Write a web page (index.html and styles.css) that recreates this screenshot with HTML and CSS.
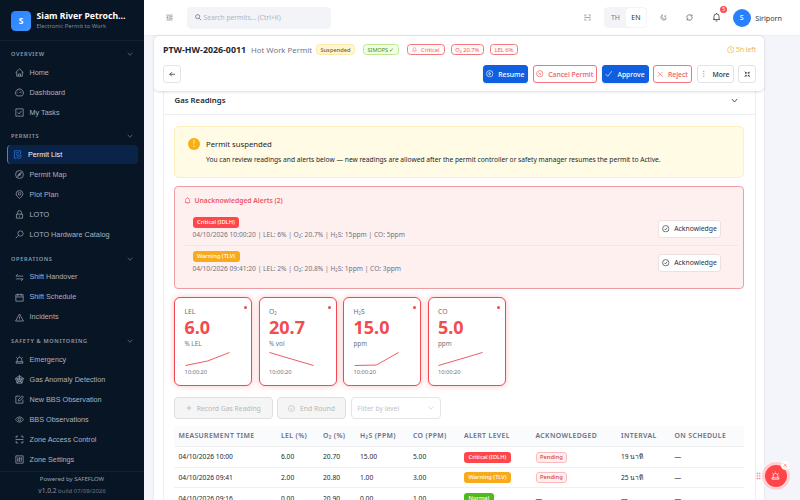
FILE: index.html
```html
<!DOCTYPE html>
<html lang="en">
  <head>
    <meta charset="UTF-8" />
    <title>PTW-HW-2026-0011</title>
    <meta name="viewport" content="width=device-width, initial-scale=1.0" />
    <link rel="stylesheet" href="styles.css">
  </head>
  <body>
    <!-- icon sprite -->
    <svg class="sprite">
      <symbol id="home" viewBox="0 0 16 16"><path d="M1 8.2 8 1.5l7 6.7M3 7v7.5h10V7M6.3 14.5v-4h3.4v4" /></symbol>
      <symbol id="dashboard" viewBox="0 0 16 16"><path d="M3.5 14a7 7 0 1 1 9 0zM8 9l3-3.2M8 3.2v1.2M3.2 8.5h1.2M11.6 8.5h1.2M4.7 5l.8.8" /></symbol>
      <symbol id="tasks" viewBox="0 0 16 16"><path d="M1.5 1.5h13v13h-13zM4.8 7.8l2.5 2.8 4-5.3" /></symbol>
      <symbol id="permit" viewBox="0 0 16 16"><path d="M6.5 14.5h-4v-13h11v6M5 5h6M5 8h2.5M11 8.5l3.3 1.2v2.5c0 1.6-1.5 2.5-3.3 3.3-1.8-.8-3.3-1.7-3.3-3.3V9.7zM9.7 11.8l1 1 1.6-1.8" /></symbol>
      <symbol id="compass" viewBox="0 0 16 16"><circle cx="8" cy="8" r="7" /><path d="m11.3 4.7-2 4.6-4.6 2 2-4.6zM7 7l2 2" /></symbol>
      <symbol id="pin" viewBox="0 0 16 16"><path d="M8 15c3.5-3 6-5.3 6-8.5A5.8 5.8 0 0 0 8 1a5.8 5.8 0 0 0-6 5.5C2 9.7 4.5 12 8 15z" /><circle cx="8" cy="6.7" r="2.3" /></symbol>
      <symbol id="lock" viewBox="0 0 16 16"><path d="M2.5 7.5h11v7h-11zM4.700 7.500V4.300a3.300 3.300 0 0 1 6.600 0v3.200M8 10v2" /></symbol>
      <symbol id="search" viewBox="0 0 16 16"><circle cx="6.5" cy="6.5" r="5" /><path d="m10.3 10.3 4.7 4.7" /></symbol>
      <symbol id="tool" viewBox="0 0 16 16"><circle cx="9.8" cy="6.2" r="4.7" /><path d="m6.3 9.7-5 5" /></symbol>
      <symbol id="swap" viewBox="0 0 16 16"><path d="M14.5 5.5h-13L5 2M1.5 10.5h13L11 14" /></symbol>
      <symbol id="calendar" viewBox="0 0 16 16"><path d="M1.5 3h13v11.5h-13zM1.5 7h13M5 1v4M11 1v4" /></symbol>
      <symbol id="warning" viewBox="0 0 16 16"><path d="m8 1.8 7 12.5H1zM8 6.3v4M8 11.5v1.2" /></symbol>
      <symbol id="alert" viewBox="0 0 16 16"><path d="M3.8 12V8.500a4.200 4.200 0 0 1 8.400 0V12M2 12h12v2.500H2zM8 1v1.500M2 3.500l1.200 1M14 3.500l-1.200 1" /></symbol>
      <symbol id="radar" viewBox="0 0 16 16"><path d="m8 1 7 5.200-2.700 8.300H3.700L1 6.200zM8 4.200l4 3-1.500 4.600h-5L4 7.200zM8 1v7l7-1.800M8 8l4.300 6.500M8 8l-4.300 6.500M8 8 1 6.200" /></symbol>
      <symbol id="form" viewBox="0 0 16 16"><path d="M14 8v6.500H1.500V2H9M6 10.500V8l7-6.500L15 3.500 8.500 10.500z" /></symbol>
      <symbol id="eye" viewBox="0 0 16 16"><path d="M1 8c3.500-6 10.500-6 14 0-3.500 6-10.500 6-14 0z" /><circle cx="8" cy="8" r="2.4" /></symbol>
      <symbol id="scan" viewBox="0 0 16 16"><path d="M2 5.500V2h3.500M10.500 2H14v3.500M14 10.500V14h-3.500M5.500 14H2v-3.500M1 8h14" /></symbol>
      <symbol id="control" viewBox="0 0 16 16"><path d="M1.500 1.500h13v13h-13zM5 4v8M8 4v8M11 4v8M4 9h2M10 6.500h2" /></symbol>
      <symbol id="down" viewBox="0 0 16 16"><path d="m2 4.500 6 7 6-7" /></symbol>
      <symbol id="fold" viewBox="0 0 16 16"><path d="M1 2.500h14M7 6.200h8M7 9.800h8M1 13.500h14M4.500 5.800 1.500 8l3 2.200z" /></symbol>
      <symbol id="moon" viewBox="0 0 16 16"><path d="M6 1.500A6.500 6.500 0 1 0 14.500 10 6 6 0 0 1 6 1.500zM10.500 4h3l-3 3h3" /></symbol>
      <symbol id="sync" viewBox="0 0 16 16"><path d="M2 9.500A6.200 6.200 0 0 1 12.800 4M14 6.500A6.200 6.200 0 0 1 3.200 12M13.500 1.500v3.300h-2.500M2.500 14.500v-3.300H5" /></symbol>
      <symbol id="bell" viewBox="0 0 16 16"><path d="M3.500 12.500V7a4.500 4.500 0 0 1 9 0v5.500M1.800 12.500h12.400M8 1v1.500M6.300 15h3.400" /></symbol>
      <symbol id="back" viewBox="0 0 16 16"><path d="M14.500 8H2M7 3 2 8l5 5" /></symbol>
      <symbol id="play" viewBox="0 0 16 16"><circle cx="8" cy="8" r="6.8" /><path d="m6.500 5 4 3-4 3z" /></symbol>
      <symbol id="close-circle" viewBox="0 0 16 16"><circle cx="8" cy="8" r="6.8" /><path d="m5.800 5.800 4.400 4.400M10.200 5.800l-4.400 4.400" /></symbol>
      <symbol id="check-circle" viewBox="0 0 16 16"><circle cx="8" cy="8" r="6.8" /><path d="m5 8 2.300 2.500L11 5.800" /></symbol>
      <symbol id="check" viewBox="0 0 16 16"><path d="m1.500 8.500 4.500 5 8.500-11" /></symbol>
      <symbol id="close" viewBox="0 0 16 16"><path d="m2 2 12 12M14 2 2 14" /></symbol>
      <symbol id="more" viewBox="0 0 16 16"><path d="M8 2v1.800M8 7.100v1.800M8 12.200V14" /></symbol>
      <symbol id="shrink" viewBox="0 0 16 16"><path d="M5.500 2.500v3h-3M10.500 2.500v3h3M5.500 13.500v-3h-3M10.500 13.500v-3h3M5.500 5.500l-4-4M10.500 5.500l4-4M5.500 10.500l-4 4M10.500 10.500l4 4" /></symbol>
      <symbol id="clock" viewBox="0 0 16 16"><circle cx="8" cy="8" r="6.8" /><path d="M8 4v4.500l3 1.500" /></symbol>
      <symbol id="plus" viewBox="0 0 16 16"><path d="M8 1.500v13M1.500 8h13" /></symbol>
    </svg>

    <aside class="sidebar">
      <div class="brand">
        <div class="logo">S</div>
        <div class="brand-text">
          <strong>Siam River Petroch...</strong>
          <span>Electronic Permit to Work</span>
        </div>
      </div>
      <nav>
        <section>
          <h2>OVERVIEW <svg><use href="#down" /></svg></h2>
          <a><svg><use href="#home" /></svg>Home</a>
          <a><svg><use href="#dashboard" /></svg>Dashboard</a>
          <a><svg><use href="#tasks" /></svg>My Tasks</a>
        </section>
        <section>
          <h2>PERMITS <svg><use href="#down" /></svg></h2>
          <a class="active"><svg><use href="#permit" /></svg>Permit List</a>
          <a><svg><use href="#compass" /></svg>Permit Map</a>
          <a><svg><use href="#pin" /></svg>Plot Plan</a>
          <a><svg><use href="#lock" /></svg>LOTO</a>
          <a><svg><use href="#tool" /></svg>LOTO Hardware Catalog</a>
        </section>
        <section>
          <h2>OPERATIONS <svg><use href="#down" /></svg></h2>
          <a><svg><use href="#swap" /></svg>Shift Handover</a>
          <a><svg><use href="#calendar" /></svg>Shift Schedule</a>
          <a><svg><use href="#warning" /></svg>Incidents</a>
        </section>
        <section>
          <h2>SAFETY &amp; MONITORING <svg><use href="#down" /></svg></h2>
          <a><svg><use href="#alert" /></svg>Emergency</a>
          <a><svg><use href="#radar" /></svg>Gas Anomaly Detection</a>
          <a><svg><use href="#form" /></svg>New BBS Observation</a>
          <a><svg><use href="#eye" /></svg>BBS Observations</a>
          <a><svg><use href="#scan" /></svg>Zone Access Control</a>
          <a><svg><use href="#control" /></svg>Zone Settings</a>
        </section>
      </nav>
      <footer>
        <div>Powered by SAFEFLOW</div>
        <div class="version"><b>v1.0.2</b> build 07/09/2026</div>
      </footer>
    </aside>

    <div class="page">
      <header class="topbar">
        <svg class="fold"><use href="#fold" /></svg>
        <div class="search"><svg><use href="#search" /></svg>Search permits... (Ctrl+K)</div>
        <div class="top-actions">
          <svg><use href="#scan" /></svg>
          <div class="lang"><span>TH</span><span class="on">EN</span></div>
          <svg class="moon"><use href="#moon" /></svg>
          <svg class="sync"><use href="#sync" /></svg>
          <div class="bell"><svg><use href="#bell" /></svg><i>5</i></div>
          <div class="avatar">S</div>
          <span class="user">Siriporn</span>
        </div>
      </header>

      <main>
        <div class="permit-header">
          <div class="title-row">
            <h1>PTW-HW-2026-0011</h1>
            <span class="type">Hot Work Permit</span>
            <span class="tag suspended">Suspended</span>
            <span class="tag simops">SIMOPS ✓</span>
            <span class="tag danger critical-tag"><svg><use href="#bell" /></svg>Critical</span>
            <span class="tag danger o2">O₂ 20.7%</span>
            <span class="tag danger lel">LEL 6%</span>
            <span class="left"><svg><use href="#clock" /></svg>5h left</span>
          </div>
          <div class="button-row">
            <button class="btn back"><svg><use href="#back" /></svg></button>
            <button class="btn primary resume"><svg><use href="#play" /></svg>Resume</button>
            <button class="btn red cancel"><svg><use href="#close-circle" /></svg>Cancel Permit</button>
            <button class="btn primary approve"><svg><use href="#check" /></svg>Approve</button>
            <button class="btn red reject"><svg><use href="#close" /></svg>Reject</button>
            <button class="btn more"><svg><use href="#more" /></svg>More</button>
            <button class="btn shrink"><svg><use href="#shrink" /></svg></button>
          </div>
        </div>

        <div class="body">
          <div class="panel">
            <div class="panel-head">Gas Readings <svg><use href="#down" /></svg></div>
            <div class="panel-body">
              <div class="notice">
                <div class="bang">!</div>
                <div>
                  <h3>Permit suspended</h3>
                  <p>You can review readings and alerts below — new readings are allowed after the permit controller or safety manager resumes the permit to Active.</p>
                </div>
              </div>

              <div class="alerts">
                <h3><svg><use href="#bell" /></svg>Unacknowledged Alerts (2)</h3>
                <div class="alert-row">
                  <div>
                    <span class="pill critical">Critical (IDLH)</span>
                    <p>04/10/2026 10:00:20 | LEL: 6% | O₂: 20.7% | H₂S: 15ppm | CO: 5ppm</p>
                  </div>
                  <button class="btn ack"><svg><use href="#check-circle" /></svg>Acknowledge</button>
                </div>
                <div class="alert-row">
                  <div>
                    <span class="pill warn">Warning (TLV)</span>
                    <p>04/10/2026 09:41:20 | LEL: 2% | O₂: 20.8% | H₂S: 1ppm | CO: 3ppm</p>
                  </div>
                  <button class="btn ack"><svg><use href="#check-circle" /></svg>Acknowledge</button>
                </div>
              </div>

              <div class="gauges">
                <div class="gauge">
                  <span>LEL</span><strong>6.0</strong><small>% LEL</small>
                  <svg viewBox="0 0 46 16"><path d="M.5 14.500 22.500 10 44.500 1.500" /></svg>
                  <time>10:00:20</time>
                </div>
                <div class="gauge">
                  <span>O₂</span><strong>20.7</strong><small>% vol</small>
                  <svg viewBox="0 0 46 16"><path d="M.5 1.500 22.500 8 44.500 14.500" /></svg>
                  <time>10:00:20</time>
                </div>
                <div class="gauge">
                  <span>H₂S</span><strong>15.0</strong><small>ppm</small>
                  <svg viewBox="0 0 46 16"><path d="M.5 14.500 22.500 14 44.500 1.500" /></svg>
                  <time>10:00:20</time>
                </div>
                <div class="gauge">
                  <span>CO</span><strong>5.0</strong><small>ppm</small>
                  <svg viewBox="0 0 46 16"><path d="M.5 14.500 22.500 8 44.500 1.500" /></svg>
                  <time>10:00:20</time>
                </div>
              </div>

              <div class="tools">
                <button class="record" disabled><svg><use href="#plus" /></svg>Record Gas Reading</button>
                <button class="end" disabled><svg><use href="#check-circle" /></svg>End Round</button>
                <div class="select">Filter by level <svg><use href="#down" /></svg></div>
              </div>

              <table>
                <colgroup>
                  <col class="c-time"><col class="c-lel"><col class="c-o2"><col class="c-h2s"><col class="c-co"><col class="c-level"><col class="c-ack"><col class="c-int"><col>
                </colgroup>
                <thead>
                  <tr><th>MEASUREMENT TIME</th><th>LEL (%)</th><th>O₂ (%)</th><th>H₂S (PPM)</th><th>CO (PPM)</th><th>ALERT LEVEL</th><th>ACKNOWLEDGED</th><th>INTERVAL</th><th>ON SCHEDULE</th></tr>
                </thead>
                <tbody>
                  <tr><td>04/10/2026 10:00</td><td>6.00</td><td>20.70</td><td>15.00</td><td>5.00</td><td><span class="pill critical">Critical (IDLH)</span></td><td><span class="pill pending">Pending</span></td><td>19 นาที</td><td>—</td></tr>
                  <tr><td>04/10/2026 09:41</td><td>2.00</td><td>20.80</td><td>1.00</td><td>3.00</td><td><span class="pill warn">Warning (TLV)</span></td><td><span class="pill pending">Pending</span></td><td>25 นาที</td><td>—</td></tr>
                  <tr><td>04/10/2026 09:16</td><td>0.00</td><td>20.90</td><td>0.00</td><td>1.00</td><td><span class="pill normal">Normal</span></td><td>—</td><td>—</td><td>—</td></tr>
                </tbody>
              </table>
            </div>
          </div>
        </div>
      </main>
    </div>

    <div class="sos">
      <div class="grip"></div>
      <div class="sos-button"><svg><use href="#alert" /></svg></div>
      <div class="sos-close"><svg><use href="#close" /></svg></div>
    </div>
  </body>
</html>
```
FILE: styles.css
```css
* {
  box-sizing: border-box;
}

html,
body {
  height: 100%;
  margin: 0;
  overflow: hidden;
}

body {
  display: flex;
  background: #f4f5fa;
  color: #24272f;
  font-family: "Noto Sans", sans-serif;
  font-size: 7px;
  line-height: 10px;
  white-space: nowrap;
}

h1,
h2,
h3,
p {
  margin: 0;
}

svg {
  width: 8px;
  height: 8px;
  flex: none;
  fill: none;
  stroke: currentColor;
  stroke-width: 1.4;
}

.sprite {
  position: absolute;
  width: 0;
  height: 0;
}

/* sidebar */
.sidebar {
  width: 144px;
  height: 500px;
  flex: none;
  display: flex;
  flex-direction: column;
  background: #081525;
  color: #a9b2bf;
}

.brand {
  height: 41px;
  flex: none;
  display: flex;
  align-items: center;
  gap: 5.5px;
  padding: 1px 0 0 11px;
  border-bottom: 1px solid #122033;
}

.logo {
  width: 20px;
  height: 20px;
  border-radius: 4.5px;
  background: linear-gradient(135deg, #2a82ff, #4096ff);
  color: #fff;
  font-size: 8.5px;
  font-weight: 700;
  line-height: 20px;
  text-align: center;
}

.brand-text strong,
.brand-text span {
  display: block;
}

.brand-text strong {
  color: #fff;
  font-size: 8.7px;
  line-height: 11px;
}

.brand-text span {
  color: #7e8998;
  font-size: 5.85px;
  line-height: 9px;
}

nav {
  flex: 1;
  min-height: 0;
  padding: 5px 6.5px 0;
}

nav section {
  margin-bottom: 6.4px;
}

nav h2 {
  height: 16px;
  display: flex;
  align-items: center;
  justify-content: space-between;
  margin-bottom: 1px;
  padding: 0 4.5px;
  color: #8e99a8;
  font-size: 5.6px;
  font-weight: 600;
  letter-spacing: 0.65px;
}

nav h2 svg {
  width: 6px;
  height: 6px;
}

nav a {
  height: 19px;
  display: flex;
  align-items: center;
  gap: 6px;
  margin-bottom: 1px;
  padding-left: 8px;
  border-radius: 4px;
  font-family: "Liberation Sans", sans-serif;
  font-size: 7.25px;
}

nav a svg {
  width: 9px;
  height: 9px;
  stroke-width: 1.2;
}

nav a.active {
  border-left: 1.5px solid #3f86e8;
  padding-left: 5.5px;
  background: #0a2348;
  color: #f2f6fc;
}

nav a.active svg {
  color: #2f7df0;
}

.sidebar footer {
  height: 29px;
  flex: none;
  border-top: 1px solid #122033;
  padding-top: 2px;
  color: #97a1af;
  font-size: 6px;
  text-align: center;
}

.version {
  margin-top: 2px;
  color: #6b7787;
}

.version b {
  color: #8b96a5;
  font-size: 6.6px;
  font-weight: 400;
}

/* top bar */
.page {
  flex: 1;
  min-width: 0;
}

.topbar {
  height: 35px;
  display: flex;
  align-items: center;
  padding: 0 18px 0 21.5px;
  background: #fff;
  box-shadow: 0 0 2px #00000018;
}

.fold {
  width: 7px;
  height: 7px;
  color: #666b75;
}

.search {
  width: 144px;
  height: 22px;
  display: flex;
  align-items: center;
  gap: 2.5px;
  margin-left: 14px;
  padding-left: 8px;
  border-radius: 4.5px;
  background: #f3f4f8;
  color: #b1b4bc;
  font-size: 6.7px;
}

.search svg {
  width: 6.5px;
  height: 6.5px;
  color: #656a75;
  stroke-width: 1.8;
}

.top-actions {
  display: flex;
  align-items: center;
  margin-left: auto;
  color: #343841;
}

.top-actions > svg {
  width: 7px;
  height: 7px;
  color: #6c717b;
}

.lang {
  height: 21px;
  display: flex;
  align-items: center;
  margin-left: 13px;
  padding: 1px;
  border-radius: 4.5px;
  background: #f3f4f8;
  color: #777c88;
}

.lang span {
  width: 20.5px;
  height: 19px;
  border-radius: 4px;
  line-height: 19px;
  text-align: center;
}

.lang .on {
  background: #fff;
  color: #30343c;
}

.moon {
  margin-left: 13px;
}

.top-actions > .sync {
  margin-left: 19px;
  color: #343841;
}

.bell {
  position: relative;
  width: 9px;
  height: 10px;
  margin: -2px 0 0 18.5px;
}

.bell svg {
  display: block;
  width: 9px;
  height: 10px;
}

.bell i {
  position: absolute;
  left: 8.5px;
  top: -6px;
  width: 7px;
  height: 7px;
  border-radius: 50%;
  background: #ff4d4f;
  color: #fff;
  font-size: 5px;
  font-style: normal;
  line-height: 7px;
  text-align: center;
}

.avatar {
  width: 18px;
  height: 18px;
  margin: 0 4.5px 0 12px;
  border-radius: 50%;
  background: #2a7fff;
  color: #fff;
  font-size: 7px;
  font-weight: 500;
  line-height: 18px;
  text-align: center;
}

.user {
  font-size: 7.2px;
}

/* permit header */
main {
  width: 610px;
  margin: 1px 0 0 10px;
}

.permit-header {
  position: relative;
  z-index: 1;
  height: 54.5px;
  padding: 7px 8px 7px 9px;
  border-radius: 5px;
  background: #fff;
  box-shadow: 0 0.5px 3px #00000026;
}

.title-row {
  height: 13px;
  display: flex;
  align-items: center;
}

h1 {
  font-size: 8.8px;
  font-weight: 700;
  width: 83px;
}

.type {
  width: 65px;
  margin-left: 5px;
  color: #737883;
  font-size: 7.8px;
}

.tag {
  height: 11.5px;
  display: flex;
  align-items: center;
  justify-content: center;
  margin-right: 8px;
  border: 0.8px solid;
  border-radius: 3.5px;
  font-size: 5.7px;
}

.tag svg {
  width: 5px;
  height: 5px;
  margin-right: 4px;
}

.tag.suspended {
  width: 39px;
  border-color: #ffe9a8;
  background: #fff6d6;
  color: #7e6021;
  font-weight: 500;
}

.tag.simops {
  width: 36px;
  border-color: #b7eb8f;
  background: #f0ffe5;
  color: #3a8f1e;
  font-size: 5.5px;
}

.tag.danger {
  border-color: #f3797e;
  background: #fffafa;
  color: #ee5d64;
  margin-right: 6.5px;
}

.critical-tag {
  width: 37.5px;
}

.o2 {
  width: 32.5px;
}

.lel {
  width: 28px;
}

.left {
  display: flex;
  align-items: center;
  gap: 2px;
  margin-left: auto;
  color: #f2b33b;
  font-size: 6.7px;
}

.left svg {
  width: 7.5px;
  height: 7.5px;
}

.button-row {
  display: flex;
  gap: 4.5px;
  margin-top: 9px;
}

.btn {
  height: 18px;
  display: flex;
  align-items: center;
  justify-content: center;
  gap: 4.5px;
  padding: 0;
  border: 1px solid #e2e3e7;
  border-radius: 3px;
  background: #fff;
  color: #2b2e36;
  font: 500 6.8px "Noto Sans", sans-serif;
}

.btn svg {
  width: 7.5px;
  height: 7.5px;
}

.back {
  width: 18px;
  margin-right: auto;
}

.btn.back svg,
.btn.reject svg,
.btn.shrink svg {
  width: 6.5px;
  height: 6.5px;
}

.btn.back svg,
.btn.shrink svg {
  stroke-width: 1.9;
}

.primary {
  border-color: #0f5fe0;
  background: #0f5fe0;
  color: #fff;
  box-shadow: 0 1px 2px #0f5fe026;
}

.red {
  border-color: #f47479;
  color: #ef585e;
}

.resume {
  width: 45.5px;
}

.cancel {
  width: 64.5px;
}

.approve {
  width: 47px;
}

.reject {
  width: 39px;
}

.more {
  width: 37px;
}

.shrink {
  width: 18px;
}

/* scrolled content */
.body {
  height: 415px;
  padding: 0 8.5px;
  margin-top: -4px;
  background: #fff;
  box-shadow: 0 0 2px #0000001c;
}

.panel {
  height: 100%;
  border: solid #efeff2;
  border-width: 0 1px;
}

.panel-head {
  height: 28px;
  display: flex;
  align-items: center;
  justify-content: space-between;
  padding: 0 16.5px 0 11px;
  border-bottom: 1px solid #efeff2;
  font-size: 7.8px;
  font-weight: 600;
}

.panel-head svg {
  width: 7px;
  height: 7px;
  stroke-width: 1.8;
}

.panel-body {
  padding: 11.5px 10.5px 0;
}

.notice {
  height: 52px;
  display: flex;
  gap: 6px;
  padding: 10.5px 13px;
  border: 1px solid #fdf0b9;
  border-radius: 5px;
  background: #fffbe4;
}

.bang {
  width: 12px;
  height: 12px;
  border-radius: 50%;
  background: #faad14;
  color: #fff;
  font-size: 8px;
  line-height: 12px;
  text-align: center;
}

.notice h3 {
  font-size: 7.7px;
  font-weight: 400;
  line-height: 12px;
}

.notice p {
  margin-top: 5.5px;
  font-size: 6.67px;
}

.alerts {
  height: 102.5px;
  margin-top: 8px;
  padding: 8.5px 5px 0 8.5px;
  border: 1px solid #ef9ca3;
  border-radius: 4px;
  background: #fff0f0;
}

.alerts h3 {
  display: flex;
  align-items: center;
  gap: 4px;
  color: #ee5760;
  font-size: 6.75px;
  font-weight: 600;
}

.alerts h3 svg {
  width: 7px;
  height: 7px;
}

.alert-row {
  height: 33.5px;
  display: flex;
  align-items: center;
  justify-content: space-between;
  padding: 0 17px 0 9px;
}

.alerts h3 + .alert-row {
  margin-top: 7px;
  border-bottom: 1px solid #f7e3e4;
}

.alert-row p {
  margin-top: 2px;
  color: #70737d;
  font-size: 6.65px;
}

.ack {
  width: 63px;
  border-color: #eee0e1;
  font-weight: 400;
}

.pill {
  height: 11px;
  display: inline-block;
  padding: 0 4.5px;
  border-radius: 3px;
  color: #fff;
  font-size: 5.75px;
  font-weight: 500;
  line-height: 11px;
  vertical-align: middle;
}

.alert-row .pill {
  display: block;
  width: max-content;
}

.critical {
  background: #ff474b;
}

.warn {
  background: #f9aa1b;
}

.normal {
  background: #4fbb1b;
}

.pending {
  padding: 0 3.5px;
  border: 0.8px solid #ffb8bc;
  background: #fff0f0;
  color: #cf3c52;
  line-height: 9.5px;
}

/* gas cards */
.gauges {
  display: flex;
  gap: 6.5px;
  margin-top: 8.5px;
}

.gauge {
  position: relative;
  width: 78px;
  height: 89px;
  padding: 9px 9.5px 0;
  border: 1.5px solid #f0494f;
  border-radius: 6px;
  background: #fff;
  box-shadow: 0 0 6px #ff4d4f55;
}

.gauge::after {
  content: "";
  position: absolute;
  top: 8px;
  right: 4.5px;
  width: 3px;
  height: 3px;
  border-radius: 50%;
  background: #f0494f;
}

.gauge > * {
  display: block;
}

.gauge span {
  color: #696d76;
  font-size: 6.8px;
}

.gauge strong {
  color: #f24c50;
  font-size: 18px;
  line-height: 21px;
}

.gauge small {
  margin-top: 1px;
  color: #6f737c;
  font-size: 6.3px;
}

.gauge svg {
  width: 46px;
  height: 16px;
  margin-top: 1.5px;
  color: #ef5b60;
  stroke-width: 1;
}

.gauge time {
  color: #70747d;
  font-size: 5.7px;
  line-height: 10px;
}

.tools {
  display: flex;
  gap: 4.5px;
  margin: 11px 0 7px;
}

.tools button,
.select {
  height: 22px;
  display: flex;
  align-items: center;
  justify-content: center;
  gap: 5px;
  padding: 0;
  border: 1px solid #dfdfdf;
  border-radius: 4px;
  background: #f5f5f5;
  color: #b7b7b7;
  font: 400 6.8px "Noto Sans", sans-serif;
}

.tools button svg {
  width: 7px;
  height: 7px;
}

.tools .record svg {
  width: 6px;
  height: 6px;
  stroke-width: 2;
}

.tools .record {
  width: 98.5px;
}

.tools .end {
  width: 69px;
}

.select {
  width: 90px;
  justify-content: space-between;
  padding: 0 6px;
  border-color: #e4e4e6;
  background: #fff;
  color: #bfbfc3;
}

.tools .select svg {
  width: 6px;
  height: 6px;
}

table {
  width: 100%;
  table-layout: fixed;
  border-collapse: collapse;
}

.c-time { width: 102.5px; }
.c-lel { width: 42px; }
.c-o2 { width: 37px; }
.c-h2s { width: 53px; }
.c-co { width: 51px; }
.c-level { width: 71.5px; }
.c-ack { width: 85.5px; }
.c-int { width: 53.5px; }

th,
td {
  padding: 0 0 0 4.5px;
  border-bottom: 1px solid #f0f0f3;
  text-align: left;
}

th {
  height: 20.5px;
  background: #fafbfd;
  color: #697084;
  font-size: 6.9px;
  font-weight: 600;
  letter-spacing: 0.36px;
}

td {
  height: 20.7px;
  font-size: 6.7px;
  line-height: 11px;
}

/* floating emergency button */
.sos {
  position: absolute;
  z-index: 2;
  right: 10.5px;
  bottom: 10.5px;
  display: flex;
  align-items: center;
  gap: 1px;
}

.grip {
  width: 5px;
  height: 8px;
  background: radial-gradient(circle, #f07a7e 0.6px, transparent 1px) 0 0 / 2.5px 2.6px;
}

.sos-button {
  width: 22px;
  height: 22px;
  display: flex;
  align-items: center;
  justify-content: center;
  margin: 3px;
  border-radius: 50%;
  background: #ff4549;
  box-shadow: 0 0 0 3px #ffd0d3;
  color: #fff;
}

.sos-button svg {
  width: 9px;
  height: 9px;
}

.sos-close {
  position: absolute;
  top: -1px;
  right: 0;
  width: 9px;
  height: 9px;
  display: flex;
  align-items: center;
  justify-content: center;
  border-radius: 50%;
  background: #fff;
  color: #ef5b60;
}

.sos-close svg {
  width: 4.5px;
  height: 4.5px;
  stroke-width: 2;
}
```
